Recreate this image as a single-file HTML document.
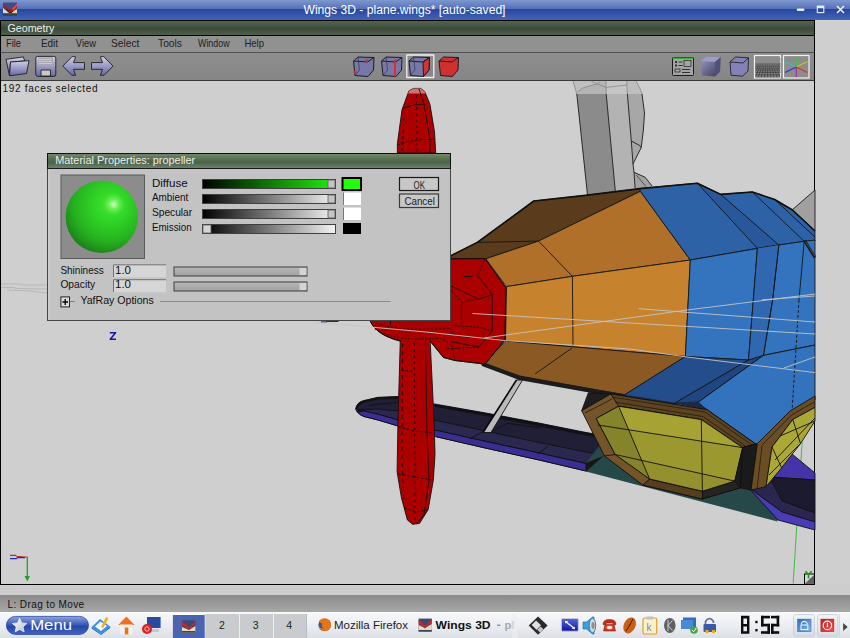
<!DOCTYPE html>
<html><head><meta charset="utf-8">
<style>
html,body{margin:0;padding:0;width:850px;height:638px;overflow:hidden;background:#d0d0d0;}
svg{display:block;}
text{font-family:"Liberation Sans",sans-serif;}
.mono{font-family:"Liberation Mono",monospace;}
</style></head><body>
<svg width="850" height="638" viewBox="0 0 850 638">
<defs>
<linearGradient id="gTitle" x1="0" y1="0" x2="0" y2="20" gradientUnits="userSpaceOnUse">
<stop offset="0" stop-color="#7f97cf"/><stop offset="0.43" stop-color="#5571b9"/>
<stop offset="0.45" stop-color="#24469e"/><stop offset="1" stop-color="#4464b6"/>
</linearGradient>
<linearGradient id="gGeo" x1="0" y1="0" x2="0" y2="1">
<stop offset="0" stop-color="#53644f"/><stop offset="0.55" stop-color="#3c4b3a"/><stop offset="1" stop-color="#4e5f4a"/>
</linearGradient>
<linearGradient id="gStatus" x1="0" y1="0" x2="0" y2="1">
<stop offset="0" stop-color="#8a8a8a"/><stop offset="1" stop-color="#a8a8a8"/>
</linearGradient>
<linearGradient id="gTask" x1="0" y1="0" x2="0" y2="1">
<stop offset="0" stop-color="#f6f6f6"/><stop offset="1" stop-color="#e4e4e4"/>
</linearGradient>
</defs>

<!-- desktop background -->
<rect x="0" y="0" width="850" height="638" fill="#cfcfcf"/>

<!-- title bar -->
<rect x="0" y="0" width="850" height="20" fill="url(#gTitle)"/>
<text x="303.5" y="14" font-size="12" fill="#ffffff" textLength="202" lengthAdjust="spacingAndGlyphs">Wings 3D - plane.wings* [auto-saved]</text>

<!-- window frame -->
<rect x="0" y="20" width="815" height="565" fill="#000"/>
<!-- geometry bar -->
<rect x="1" y="21" width="813" height="14" fill="url(#gGeo)"/>
<text x="7.4" y="31.5" font-size="10.7" fill="#f0f0f0" textLength="47" lengthAdjust="spacingAndGlyphs">Geometry</text>
<!-- menu bar -->
<rect x="1" y="36" width="813" height="16" fill="#919191"/>
<rect x="1" y="52" width="813" height="1" fill="#505050"/>
<g font-size="10.6" fill="#1e1e1e">
<text x="6.1" y="47.2" textLength="14.9" lengthAdjust="spacingAndGlyphs">File</text><text x="40.9" y="47.2" textLength="17.1" lengthAdjust="spacingAndGlyphs">Edit</text><text x="75.8" y="47.2" textLength="20.2" lengthAdjust="spacingAndGlyphs">View</text>
<text x="111" y="47.2" textLength="28.4" lengthAdjust="spacingAndGlyphs">Select</text><text x="158" y="47.2" textLength="24" lengthAdjust="spacingAndGlyphs">Tools</text><text x="198" y="47.2" textLength="31.6" lengthAdjust="spacingAndGlyphs">Window</text><text x="244.4" y="47.2" textLength="19.6" lengthAdjust="spacingAndGlyphs">Help</text>
</g>
<!-- toolbar -->
<linearGradient id="gTool" x1="0" y1="0" x2="0" y2="1"><stop offset="0" stop-color="#8e8e8e"/><stop offset="1" stop-color="#868686"/></linearGradient>
<rect x="1" y="53" width="813" height="27" fill="url(#gTool)"/>
<rect x="1" y="80" width="813" height="1" fill="#3a3a3a"/>

<defs>
<linearGradient id="gLav" x1="0" y1="0" x2="0" y2="1">
<stop offset="0" stop-color="#d0d0e4"/><stop offset="1" stop-color="#6666a8"/>
</linearGradient>
<linearGradient id="gMenuBtn" x1="0" y1="0" x2="0" y2="1">
<stop offset="0" stop-color="#8ca4e0"/><stop offset="0.45" stop-color="#3c5cb8"/><stop offset="0.55" stop-color="#2446a8"/><stop offset="1" stop-color="#4664c0"/>
</linearGradient>
<radialGradient id="gSmoothCube" cx="0.6" cy="0.3" r="0.8">
<stop offset="0" stop-color="#b4b4e0"/><stop offset="0.6" stop-color="#6c6c98"/><stop offset="1" stop-color="#2c2c40"/>
</radialGradient>
</defs>
<!-- title icon -->
<rect x="3" y="2.5" width="14" height="13.2" fill="#3e4e80"/>
<polygon points="3,8 9.5,13.5 3,13.5" fill="#e4d8c4"/>
<polygon points="13,11.5 17,9 17,13.5 11,13.5" fill="#f0cc98"/>
<polygon points="5,8.5 10.5,13.5 13.5,11 10,10" fill="#1a1018"/>
<path d="M3,4.5 Q7.5,6.5 10,10.5 Q13,8 17,3.8 L17,6 Q13.5,10.5 10.5,13 Q7.5,9 3,7.5 Z" fill="#b81818"/>
<path d="M12,9 Q14.5,6.5 17,3.8 L17,5.5 Q15,8.5 13,10 Z" fill="#ff4a4a"/>
<rect x="3" y="13.3" width="14" height="2.4" fill="#2a4656"/>
<!-- window buttons -->
<rect x="796.7" y="8.5" width="7.8" height="2.6" rx="1.3" fill="#e8ecf4"/>
<rect x="817.3" y="6.1" width="6.5" height="6.5" fill="none" stroke="#e8ecf4" stroke-width="1.1"/>
<rect x="817" y="6" width="7" height="2" fill="#e8ecf4"/>
<path d="M837,6 L844,13 M844,6 L837,13" stroke="#f0f2f8" stroke-width="1.5"/>
<!-- toolbar icons -->
<g stroke="#1e1e28" stroke-width="0.9" stroke-linejoin="round">
<polygon points="6,59.3 23.4,56.9 24.7,61 10.5,62 9.5,75.8" fill="url(#gLav)"/>
<polygon points="10.5,62 29,60.7 26.5,73.5 9.5,75.8" fill="url(#gLav)"/>
<rect x="35.8" y="56.4" width="20" height="20" rx="2" fill="url(#gLav)"/>
<rect x="38.5" y="57.5" width="14.5" height="8" fill="#a8a8b0" stroke="none"/>
<path d="M39,59.5 H52 M39,61.5 H52 M39,63.5 H52" stroke="#d8d8de" stroke-width="0.7"/>
<rect x="41" y="70" width="9.5" height="6" fill="#c8c8c8" stroke="#222"/>
<polygon points="62.9,66.1 72.1,56.6 75.6,56.9 73.5,62.6 84.5,62.6 84.5,69.3 73.5,69.3 75.6,75.3 71.8,75.3" fill="url(#gLav)"/>
<polygon points="113,66.1 103.8,56.6 100.3,56.9 102.5,62.6 91.5,62.6 91.5,69.3 102.5,69.3 100.3,75.3 104.1,75.3" fill="url(#gLav)"/>
</g>
<!-- selection mode cubes -->
<g stroke="#1c1c24" stroke-width="1" stroke-linejoin="round">
<g id="cube1">
<polygon points="353.5,61 358,57 374,57.5 373.5,70 368,76.5 355,75.5" fill="#7878a8"/>
<polyline points="353.5,61 367.5,62 374,57.5 M367.5,62 368,76.5" fill="none"/>
<polyline points="358,57 359.5,70 355,75.5 M359.5,70 373.5,70" fill="none" stroke="#34344a" stroke-width="0.7"/>
</g>
<polygon points="381.5,61 386,57 402,57.5 401.5,70 396,76.5 383,75.5" fill="#7878a8"/>
<polyline points="381.5,61 395.5,62 402,57.5 M395.5,62 396,76.5" fill="none"/>
<polyline points="386,57 387.5,70 383,75.5 M387.5,70 401.5,70" fill="none" stroke="#34344a" stroke-width="0.7"/>
<rect x="406.8" y="55" width="27" height="22.5" fill="none" stroke="#f0f0f0" stroke-width="1.3"/>
<polygon points="409,61 413.5,57 429.5,57.5 429,70 423.5,76.5 410.5,75.5" fill="#7878a8"/>
<polygon points="423,62 429.5,57.5 429,70 423.5,76.5" fill="#d03434"/>
<polyline points="409,61 423,62 429.5,57.5 M423,62 423.5,76.5" fill="none"/>
<polyline points="413.5,57 415,70 410.5,75.5 M415,70 429,70" fill="none" stroke="#34344a" stroke-width="0.7"/>
<polygon points="439,61 443.5,57 458.5,57.5 458,70 452.5,76.5 440.5,75.5" fill="#d03030"/>
<polyline points="439,61 452,62 458.5,57.5 M452,62 452.5,76.5" fill="none"/>
</g>
<circle cx="366.8" cy="60.5" r="1.6" fill="#e02828"/>
<circle cx="355" cy="72" r="1.6" fill="#e02828"/>
<rect x="394" y="59.5" width="1.8" height="17" fill="#e02828"/>
<!-- right toolbar icons -->
<rect x="672.5" y="57.5" width="21" height="18" rx="1" fill="#a4a4a4" stroke="#1a1a1a" stroke-width="1"/>
<rect x="673" y="57.5" width="20" height="1.5" fill="#30b030"/>
<g fill="#303030">
<rect x="675" y="61" width="2" height="2"/><rect x="678.5" y="61.5" width="4" height="1"/>
<rect x="675" y="64.5" width="2" height="2"/><rect x="678.5" y="65" width="4" height="1"/>
<rect x="684" y="60.5" width="7" height="6" fill="none" stroke="#303030" stroke-width="0.8"/>
<rect x="675" y="69" width="5" height="3" fill="none" stroke="#303030" stroke-width="0.8"/>
<rect x="682" y="69" width="8" height="1"/><rect x="682" y="72" width="8" height="1"/>
</g>
<linearGradient id="gCubeF" x1="0" y1="0" x2="1" y2="1"><stop offset="0" stop-color="#9a9ac8"/><stop offset="1" stop-color="#383858"/></linearGradient>
<polygon points="701,61 706.5,56.8 720.6,57.2 720,71.5 715,76.5 702,75.5" fill="url(#gCubeF)"/>
<polygon points="701,61 706.5,56.8 720.6,57.2 715,62" fill="#9c9ccc"/>
<polygon points="715,62 720.6,57.2 720,71.5 715,76.5" fill="#505078"/>
<g stroke="#22222e" stroke-width="0.9" stroke-linejoin="round">
<polygon points="730,62 735.5,57 748.5,57.8 748,71 742.5,76.2 731,75.2" fill="#8282b6"/>
<polyline points="730,62 743,63 748.5,57.8 M743,63 742.5,76.2" fill="none"/>
</g>
<!-- grid icon -->
<defs>
<linearGradient id="gGrid" x1="0" y1="0" x2="0" y2="1">
<stop offset="0" stop-color="#8c8c8c"/><stop offset="1" stop-color="#3a3a3a"/>
</linearGradient>
<pattern id="pGrid" width="3" height="3" patternUnits="userSpaceOnUse">
<rect width="3" height="3" fill="#7a7a7a"/><rect width="2" height="2" fill="#4a4a4a"/>
</pattern>
</defs>
<rect x="754.5" y="55.5" width="26" height="22.5" fill="#8c8c8c" stroke="#f4f4f4" stroke-width="1.2"/>
<linearGradient id="gGridFade" x1="0" y1="0" x2="0" y2="1"><stop offset="0" stop-color="#8c8c8c" stop-opacity="1"/><stop offset="1" stop-color="#8c8c8c" stop-opacity="0"/></linearGradient>
<clipPath id="cpGrid"><rect x="755.5" y="56" width="25" height="21.5"/></clipPath>
<g clip-path="url(#cpGrid)"><path d="M755.5,64 H780.5 M755.5,65.2 H780.5 M755.5,66.6 H780.5 M755.5,68.2 H780.5 M755.5,70.1 H780.5 M755.5,72.3 H780.5 M755.5,74.8 H780.5 M755.5,77.2 H780.5 M746.5,63 L722.9,77.5 M748.0,63 L726.1,77.5 M749.5,63 L729.3,77.5 M751.1,63 L732.5,77.5 M752.6,63 L735.7,77.5 M754.1,63 L738.9,77.5 M755.6,63 L742.1,77.5 M757.1,63 L745.3,77.5 M758.6,63 L748.5,77.5 M760.1,63 L751.7,77.5 M761.6,63 L754.9,77.5 M763.2,63 L758.1,77.5 M764.7,63 L761.3,77.5 M766.2,63 L764.5,77.5 M767.7,63 L767.7,77.5 M769.2,63 L770.9,77.5 M770.7,63 L774.1,77.5 M772.2,63 L777.3,77.5 M773.8,63 L780.5,77.5 M775.3,63 L783.7,77.5 M776.8,63 L786.9,77.5 M778.3,63 L790.1,77.5 M779.8,63 L793.3,77.5 M781.3,63 L796.5,77.5 M782.8,63 L799.7,77.5 M784.3,63 L802.9,77.5 M785.9,63 L806.1,77.5 M787.4,63 L809.3,77.5 M788.9,63 L812.5,77.5" stroke="#333" stroke-width="0.7" fill="none"/></g>
<rect x="755.5" y="58" width="25" height="12" fill="url(#gGridFade)"/>
<rect x="783.5" y="55.5" width="25.5" height="22.5" fill="#8c8c8c" stroke="#f4f4f4" stroke-width="1.2"/>
<g stroke-width="1.2">
<line x1="796.3" y1="57" x2="796.3" y2="67" stroke="#30d030"/>
<line x1="796.3" y1="67" x2="796.3" y2="77" stroke="#a030a0"/>
<line x1="796.3" y1="67" x2="807.5" y2="61.5" stroke="#d0c020"/>
<line x1="796.3" y1="67" x2="807.5" y2="72.5" stroke="#e03030"/>
<line x1="796.3" y1="67" x2="785" y2="62" stroke="#30c0c0"/>
<line x1="796.3" y1="67" x2="785" y2="72.5" stroke="#3030e0"/>
</g>

<!-- viewport -->
<rect x="1" y="81" width="813" height="503" fill="#cfcfcf"/>

<g id="scene">
<!-- gray strut -->
<g stroke="#1a1a1a" stroke-width="0.9" stroke-linejoin="round">
<polygon points="573,81 606,81 606.2,94 576.8,94" fill="#b4b4b4" stroke="none"/>
<polygon points="606,81 627,81 627.4,94 606.2,94" fill="#c6c6c6" stroke="none"/>
<polygon points="627,81 636.2,81 641.5,92 642,94 627.4,94" fill="#bebebe" stroke="none"/>
<polygon points="573,81 606,81 600.3,81.5 596.8,83.9 582.6,88 576.8,94" fill="#c0c0c0" stroke="none"/>
<g stroke="#8c8c8c" stroke-width="0.9" fill="none">
<polyline points="573,81 576.8,94"/><polyline points="636.2,81 641.5,92 642,94"/>
<polyline points="577.5,92 582.6,88 596.8,83.9 600.3,81.5"/><polyline points="596.8,83.9 606.2,87.4 626.8,85 627,81"/>
<polyline points="606,81 606.2,94"/><polyline points="626.8,85 627.4,94"/>
<polyline points="591,81 596.8,83.9"/>
</g>
<polygon points="576.8,94 606.2,94 615.5,193 587.5,195" fill="#8b8b8b" stroke="none"/>
<polygon points="606.2,94 627.4,94 631.3,141 633,164 634,172.3 635.1,188 615.5,193" fill="#b3b3b3" stroke="none"/>
<polygon points="627.4,94 642,94 644.5,113 643.4,130 641.2,147.6 633,164 631.3,141" fill="#a7a7a7" stroke="none"/>
<polygon points="634,172.3 645,177.2 652.1,186 650,188.5 635.1,188" fill="#a2a2a2" stroke="none"/>
<polyline points="576.8,94 587.5,195" fill="none"/><polyline points="606.2,94 615.5,193" fill="none"/><polyline points="627.4,94 631.3,141 633,164 634,172.3 635.1,188" fill="none"/>
<polyline points="642,94 644.5,113 643.4,130 641.2,147.6 633,164" fill="none"/>
<polyline points="631.3,141 639.5,145.4 641.2,147.6" fill="none"/>
<polyline points="634,172.3 645,177.2 652.1,186" fill="none"/>
<polyline points="636.2,175 646,186.5" fill="none" stroke-width="0.6"/>

<!-- right gray triangle -->
<polygon points="815,190 792,210 815,231" fill="#a0a0a0"/>
</g>
<!-- body top -->
<g stroke="#141414" stroke-width="0.9" stroke-linejoin="round">
<polygon points="451,255.6 477.3,242.4 533.8,201 585.5,195.4 640,188.6 640.4,191.3 538.5,241.1 485.8,258.8 451,258.8" fill="#5a3c1d"/>
<polyline points="477.3,242.4 538.5,241.1" fill="none"/>
<polygon points="485.8,258.8 538.5,241.1 640.4,191.3 690.3,260 572.4,276.3 506.5,286.6" fill="#b0702a"/>
<polyline points="538.5,241.1 572.4,276.3" fill="none"/>
<!-- blue upper -->
<polygon points="640.4,191.3 639.5,188.5 697.3,183.2 720.7,194.4 752.3,192 774.7,199.5 792,209.7 815,231 815,241 804.2,241.3 778.8,245 757.4,248.4 690.3,260" fill="#2e62a7"/>
<polygon points="697.3,183.2 720.7,194.4 778.8,245 757.4,248.4" fill="#285899"/>
<polyline points="752.3,192 804.2,241.3" fill="none"/>
<polyline points="774.7,199.5 815,237" fill="none"/>
<polyline points="451,255.6 477.3,242.4 533.8,201 585.5,195.4 640,188.6 697.3,183.2 720.7,194.4 752.3,192 774.7,199.5 792,209.7 815,231" fill="none" stroke="#111" stroke-width="1.6"/>
<!-- orange lower front -->
<polygon points="506.5,286.6 572.4,276.3 690.3,260 688.8,290 685.4,356.5 505.5,341" fill="#c7822e"/>
<polyline points="572.4,276.3 573,346" fill="none"/>
<!-- blue lower front -->
<polygon points="690.3,260 757.4,248.4 778.8,245 804.2,241.3 815,240 815,345 763.4,355.4 748.5,360 685.4,356.5" fill="#3474be"/>
<polyline points="757.4,248.4 753.3,300 748.5,360" fill="none"/>
<polyline points="778.8,245 772.6,300 763.4,355.4" fill="none"/>
<polygon points="757.4,248.4 778.8,245 763.4,355.4 748.5,360" fill="#2f68b0" stroke="none"/>
<polyline points="757.4,248.4 753.3,300 748.5,360" fill="none"/>
<polyline points="778.8,245 772.6,300 763.4,355.4" fill="none"/>
<polyline points="804.2,241.3 799,300" fill="none"/>
<polyline points="804.5,240.5 815,257.5" fill="none" stroke="#161616" stroke-width="2.8"/>
<polyline points="805.5,241.5 815,256.5" fill="none" stroke="#6a6a6a" stroke-width="0.7"/>
<!-- orange bottom -->
<polygon points="483.9,363.6 505.5,341 685.4,356.5 625,394.7 520,377" fill="#8b5a24"/>
<polyline points="572,348 535,374" fill="none"/>
<!-- blue bottom -->
<polygon points="685.4,356.5 748.5,360 674,403.6 623.4,395.5" fill="#234e8b"/>
<polygon points="748.5,360 763.4,355.4 698,402.4 674,403.6" fill="#1f4680"/>
<polygon points="763.4,355.4 815,345 815,400 791,412 756,446 706.9,409.6 698,402.4" fill="#3372bc"/>
<polyline points="799,300 792,412" fill="none" stroke-dasharray="3,2"/>
<!-- shadow under body -->
<polygon points="480,361 520,375.5 625,394.5 620,398 519,380 482,366" fill="#1c1c1c" stroke="none"/>
</g>
<!-- wing left -->
<g stroke="#101010" stroke-width="0.9" stroke-linejoin="round">
<path d="M355.6,408.8 Q357,402 364,400.5 L378,397.3 L398,396.5 L434,403.9 L483,412.5 L540,423.3 L586,432.5 L625,439 V470 L586,471 L540,460.2 L483,447.5 L434,436.2 L398,426 L378,420 L364,416.5 Q357,414 355.6,408.8 Z" fill="#211f36"/>
<path d="M355.6,408.8 Q357,402 364,400.5 L378,397.3 L398,396.5 L434,403.9 L483,412.5 L540,423.3 L586,432.5 L625,439 V442 L586,435.5 L540,426.5 L483,415.5 L434,406.8 L398,399 L378,399.5 L364,402.5 Q359,405 356.5,409 Z" fill="#111018" stroke="none"/>
<path d="M357.5,409.8 L364,409.5 L378,409 L398,411 L434,420 L483,430.4 L540,442.7 L586,452 L625,458 V470 L586,463.5 L540,453.2 L483,440.8 L434,429.8 L398,420 L378,414.2 L364,411 Z" fill="#2b2850"/>
<path d="M358.1,411.7 L364,411 L378,414.2 L398,420 L434,429.8 L483,440.8 L540,453.2 L586,463.5 L586,471 L540,460.2 L483,447.5 L434,436.2 L398,426 L378,420 L364,416.5 Q359.5,415 357.5,411.5 Z" fill="#3b2e92"/>
<polyline points="470.1,438.8 481.8,432.4" fill="none"/>
<polyline points="490.8,432 507.6,423.3 540,427.8" fill="none"/>
<polyline points="537.4,454.4 548,446" fill="none"/>
<polyline points="585,464 600,454" fill="none"/>
<polyline points="369,405.5 378,404 398,402.5" fill="none"/>
</g>
<g stroke="#101010" stroke-width="0.9" stroke-linejoin="round">
<!-- strut -->
<polygon points="516.5,380 522.5,380 491,432.5 483,432.5" fill="#bababa"/>
<polyline points="516.5,380 483,432.5" fill="none" stroke="#0a0a0a" stroke-width="1.6"/>
</g>
<polyline points="802.2,441.7 796.8,525 793.2,583.5" fill="none" stroke="#40c040" stroke-width="1"/>
<g stroke="#101010" stroke-width="0.9" stroke-linejoin="round">
<!-- teal shadow -->
<polygon points="586,463 600,445 700,470 760,470 777.5,519.5 777.5,521.5 586,471.5" fill="#264848" stroke="none"/>
<polygon points="586,463 603.5,456 586,471.5" fill="#161616" stroke="none"/>
<!-- right purple wing -->
<polygon points="792,454 815,473 815,480 769.5,477" fill="#4434a8"/>
<polygon points="769.5,477 815,480 815,513 782,501" fill="#1c1a2e"/>
<polygon points="748,487 769.5,477 782,501 815,513 815,522 782,512" fill="#2a2650"/>
<polygon points="748,487 782,512 815,522 815,530 778,520" fill="#4a3cb8"/>
<!-- pod -->
<polygon points="610,392 674,402.5 698,401.5 707.5,410 706.9,409.6" fill="#1a2a48" stroke="none"/>
<polygon points="581.7,410.7 588.4,392.8 612,393.9 600,405" fill="#1e1e1e"/>
<polygon points="581.7,410.7 610.8,393.9 706.9,409.6 756,444.2 740.4,487.8 702.4,499 642.7,485 604.5,456" fill="#74552a"/>
<polygon points="610.8,393.9 706.9,409.6 756,444.2 742.6,447.6 701.3,419.6 618.6,406.2" fill="#5c4321"/>
<polyline points="612,397 705,412 752,445" fill="none" stroke="#2a2010"/>
<polyline points="615,402 703,416.5 746,446.5" fill="none" stroke="#2a2010"/>
<polyline points="585,413 612,399" fill="none" stroke="#2a2010"/>
<polygon points="756,444.2 740.4,487.8 734.8,481.1 742.6,447.6" fill="#1c1c1c"/>
<polygon points="702.4,499 740.4,487.8 734.8,481.1 702.4,491.2" fill="#262420"/>
<polygon points="642.7,485 702.4,499 702.4,491.2 649.6,479" fill="#563e1e"/>
<polygon points="596.2,418.5 618.6,406.2 701.3,419.6 742.6,447.6 734.8,481.1 702.4,491.2 649.6,479 615.2,454.5" fill="#9c9830"/>
<polygon points="618.6,406.2 701.3,419.6 742.6,447.6 701.8,441.3 627,429.8" fill="#a6a234" stroke="none"/>
<polygon points="615.2,454.5 734.8,481.1 702.4,491.2 649.6,479" fill="#94902e" stroke="none"/>
<polygon points="596.2,418.5 618.6,406.2 649.6,479 615.2,454.5" fill="#86842a" stroke="none"/>
<polygon points="596.2,418.5 618.6,406.2 701.3,419.6 742.6,447.6 734.8,481.1 702.4,491.2 649.6,479 615.2,454.5" fill="none"/>
<polyline points="618.6,406.2 649.6,479" fill="none"/>
<polyline points="604.5,456 615.2,454.5 M642.7,485 649.6,479" fill="none"/>
<polyline points="598,425 742.6,447.6" fill="none"/>
<polyline points="615.2,454.5 734.8,481.1" fill="none"/>
<polyline points="701.3,419.6 702.4,491.2" fill="none"/>
<!-- right pod -->
<polygon points="740.4,487.8 756,444.2 742.6,447.6" fill="#1c1c1c"/>
<polygon points="742.6,447.6 757.4,443.6 751,490 740.4,487.8" fill="#1a1a1a"/>
<polygon points="757.4,443.6 790.2,410.9 815,396.2 815,407.4 792.8,419.5 772,447 766,486.7 751,490" fill="#6a4d25"/>
<polyline points="762,445 791.5,415 815,401.5" fill="none" stroke="#2a2010"/>
<polyline points="762,446 757,489" fill="none" stroke="#2a2010"/>
<polygon points="792.8,419.5 815,407.4 815,411.5 794.5,422.5" fill="#8a8a80" stroke="none"/>
<polygon points="772,447 792.8,419.5 815,407.4 815,421 800.5,443.6 781.6,467.8 766,486.7" fill="#aca837"/>
<polyline points="772,447 781.6,467.8" fill="none"/>
<polyline points="792.8,419.5 800.5,443.6" fill="none"/>
<polyline points="775,460 815,418" fill="none"/>
<polyline points="769,475 800.5,443.6" fill="none"/>
<polyline points="780,436 815,421" fill="none"/>
<!-- red hub -->
<path d="M400,258.8 L485.1,258.6 L505.8,287.5 L505,339.8 L485.1,364.1 L455,360.5 L443.4,357.4 L430.1,341 L400,341 Q385,337 378,331 Q372,326 369.8,320.3 L369.9,316 Z" fill="#aa0000"/>
<polyline points="451,258.8 485.1,258.6 505.8,287.5 505,339.8 485.1,364.1 455,360.5 443.4,357.4 430.1,341" fill="none"/>
<path d="M400,341 Q385,337 378,331 Q372,326 369.8,320.3" fill="none"/>
<polyline points="477.9,275.7 492.3,294.7 492.3,330.8 478.8,347 450.8,341.6" fill="none" stroke-width="0.8"/>
<polyline points="485.1,258.6 477.9,275.7 M505.8,287.5 492.3,294.7 M505,339.8 492.3,330.8 M485.1,364.1 478.8,347" fill="none" stroke-width="0.8" stroke-dasharray="2.5,1.2"/>
<polyline points="450.8,285.7 478.8,299.2 492.3,294.7" fill="none" stroke-width="0.8"/>
<polyline points="450.8,290 461.6,301.9 478.8,299.2" fill="none" stroke-width="0.8" stroke-dasharray="2.5,1.2"/>
<polyline points="461.6,301.9 461.6,325.4 M478.8,299.2 478.8,327.2" fill="none" stroke-width="0.8"/>
<polyline points="450.8,325.4 478.8,327.2 492.3,330.8" fill="none" stroke-width="0.8" stroke-dasharray="2.5,1.2"/>
<polyline points="447.2,348.8 478.8,347" fill="none" stroke-width="0.8" stroke-dasharray="2.5,1.2"/>
<polyline points="451,332 458,336 470,338" fill="none" stroke-width="0.8" stroke-dasharray="2,1.2"/>
<line x1="463.5" y1="276.6" x2="472.5" y2="276.6" stroke-width="1"/>
<path d="M375.6,323 Q392,328.5 410,329 L440,329 L451,328" fill="none" stroke-width="0.8" stroke-dasharray="2.5,1.5"/>
<path d="M374.5,329 Q385,335 400,338 Q420,340 440,338" fill="none" stroke-width="0.8" stroke-dasharray="2,1.5"/>
<polyline points="390.5,320 390.5,325 M410.5,320 410.5,329 M427.5,320 427.5,331" fill="none" stroke-width="0.9"/>
<polyline points="440,338 452,345 455,360" fill="none" stroke-width="0.8" stroke-dasharray="2,1.5"/>
<!-- upper blade -->
<polygon points="397.4,153 397.4,143.5 402,109.8 409,90.7 413.6,88.4 420.6,88.4 424.6,91.3 429.9,104 434.5,131.9 435.7,153" fill="#ac0000"/>
<polygon points="408.2,93.5 409,90.7 413.6,88.4 420.6,88.4 424.6,91.3 425.5,93.5" fill="#cf7272" stroke="none"/>
<polyline points="403,108 414,105 425,104" fill="none"/>
<polyline points="397.4,145 405,142 418,140 435,139" fill="none" stroke-dasharray="3,1.5"/>
<polyline points="419,89 424,104 430,140 430,153" fill="none"/>
<polyline points="416.5,95 417,153" fill="none" stroke-dasharray="3,3"/>
<polyline points="404,118 402,153" fill="none" stroke-dasharray="3,3"/>
<!-- lower blade -->
<polygon points="400.3,340 398,420 397.1,471.7 401.4,497.6 407.4,520 412.6,524.3 419.5,523.4 428.1,509.7 433.3,480.3 435,454.5 434,420 430.1,340" fill="#ac0000" stroke="none"/>
<polyline points="400.3,340 398,420 397.1,471.7 401.4,497.6 407.4,520 412.6,524.3 419.5,523.4 428.1,509.7 433.3,480.3 435,454.5 434,420 430.1,340" fill="none"/>
<polyline points="401.5,370 412,371.5" fill="none" stroke-dasharray="2.5,1.5"/>
<polyline points="398,427 415,431 433,433" fill="none" stroke-dasharray="3,1.5"/>
<polyline points="398.5,474 415,477 433,480" fill="none" stroke-dasharray="3,1.5"/>
<polyline points="404,508 416,512 428,510" fill="none" stroke-dasharray="3,1.5"/>
<polyline points="425.4,340 427,433 429,480 424,515 416,524" fill="none"/>
<polyline points="414.3,343 415,480 415,520" fill="none" stroke-dasharray="3,3"/>
<polyline points="402.6,343 402,460 404,500" fill="none" stroke-dasharray="4,4"/>
</g>
<!-- faint grid lines -->
<g stroke="#c4c4c4" stroke-width="0.9" fill="none">
<polyline points="315,322 370,327 430,332.4 505,340.6 630,349 687,357 815,372.6"/>
<polyline points="472.4,313.5 630,323 815,334"/>
<polyline points="484,338 687,310 815,294"/>
<polyline points="638.5,308.7 815,322"/>
<polyline points="762,299.8 815,296"/>
<polyline points="784,368 815,357"/>
</g>
<!-- z label -->
<path d="M109.8,332.8 H115.6 L110.2,339.2 H116" fill="none" stroke="#1414b0" stroke-width="1.5" stroke-linejoin="round"/>
<g stroke="#b4b4b4" stroke-width="0.9" fill="none"><polyline points="1,284 21,284 21,285 47,285"/><polyline points="1,287.5 15,287.5 15,288.5 47,289"/><polyline points="7,290 30,291 47,293"/></g>
<!-- axis indicator -->
<g fill="none" stroke-width="1.1">
<polyline points="10,555.4 15.5,555.4 16.5,556.2 28,557.2" stroke="#b03030"/>
<polyline points="10,558.6 16.5,558.6 17.5,557.6 25,557.6" stroke="#2828b0"/>
<polyline points="27.3,557.5 27.3,580" stroke="#20a030" stroke-width="1.3"/>
<polygon points="24.5,576 30,576 27.3,581.5" fill="#20a030" stroke="none"/>
</g>
<!-- green Y axis line -->

<!-- resize grip -->
<rect x="804.5" y="574" width="10" height="10" fill="#d8d8d8" stroke="#000" stroke-width="1"/>
<polygon points="814,575 814,583 805.5,583" fill="#606060"/>
<path d="M805.5,571.3 L808.5,574.8 L811.6,571.3 M808.5,574.8 V578.6" fill="none" stroke="#12a012" stroke-width="1.6"/>
</g>
<!-- dialog -->
<rect x="321" y="319.5" width="6" height="3" fill="#5a5ac8"/><rect x="326.5" y="319" width="12" height="3" fill="#1e1e98"/>
<g id="dialog">
<defs>
<linearGradient id="gDlgTitle" x1="0" y1="0" x2="0" y2="1">
<stop offset="0" stop-color="#6f886d"/><stop offset="0.35" stop-color="#56704f"/><stop offset="0.6" stop-color="#4a624a"/><stop offset="1" stop-color="#6a8468"/>
</linearGradient>
<radialGradient id="gSphere" cx="0.6" cy="0.35" r="0.72" fx="0.64" fy="0.33">
<stop offset="0" stop-color="#40e830"/><stop offset="0.35" stop-color="#2fd226"/><stop offset="0.7" stop-color="#26b01f"/><stop offset="0.92" stop-color="#1c861a"/><stop offset="1" stop-color="#145e14"/>
</radialGradient>
<radialGradient id="gSpec" cx="0.5" cy="0.5" r="0.5">
<stop offset="0" stop-color="#e8ffe0" stop-opacity="0.95"/><stop offset="0.35" stop-color="#a8ff90" stop-opacity="0.55"/><stop offset="1" stop-color="#50f040" stop-opacity="0"/>
</radialGradient>
<linearGradient id="gSlGreen" x1="0" y1="0" x2="1" y2="0">
<stop offset="0" stop-color="#000"/><stop offset="1" stop-color="#22ee10"/>
</linearGradient>
<linearGradient id="gSlGray" x1="0" y1="0" x2="1" y2="0">
<stop offset="0" stop-color="#000"/><stop offset="1" stop-color="#f4f4f4"/>
</linearGradient>
<linearGradient id="gSlFlat" x1="0" y1="0" x2="0" y2="1">
<stop offset="0" stop-color="#b8b8b8"/><stop offset="1" stop-color="#a0a0a0"/>
</linearGradient>
</defs>
<rect x="47" y="153" width="404" height="168" fill="#464646"/>
<rect x="47" y="153" width="404" height="16" fill="#111"/>
<rect x="48" y="154" width="402" height="14" fill="url(#gDlgTitle)"/>
<rect x="48" y="168" width="402" height="1" fill="#1a1a1a"/>
<rect x="48" y="169" width="402" height="151" fill="#c3c3c3"/>
<rect x="48" y="169" width="2" height="151" fill="#cacaca"/>
<text x="55.2" y="164.2" font-size="10.7" fill="#ededed" textLength="140" lengthAdjust="spacingAndGlyphs">Material Properties: propeller</text>
<!-- preview -->
<rect x="61" y="175" width="83.5" height="83.5" fill="#8c8c8c" stroke="#5a5a5a" stroke-width="1"/>
<circle cx="101.8" cy="216.8" r="36.2" fill="url(#gSphere)"/>
<circle cx="113.7" cy="204.4" r="12" fill="url(#gSpec)"/>
<!-- labels -->
<g font-size="10.7" fill="#111">
<text x="151.9" y="186.6" textLength="35.9" lengthAdjust="spacingAndGlyphs">Diffuse</text>
<text x="151.9" y="201.4" textLength="36.4" lengthAdjust="spacingAndGlyphs">Ambient</text>
<text x="151.9" y="216.3" textLength="40.3" lengthAdjust="spacingAndGlyphs">Specular</text>
<text x="151.9" y="230.9" textLength="39.8" lengthAdjust="spacingAndGlyphs">Emission</text>
<text x="60.4" y="273.8" textLength="43.3" lengthAdjust="spacingAndGlyphs">Shininess</text>
<text x="60.4" y="288.2" textLength="34.8" lengthAdjust="spacingAndGlyphs">Opacity</text>
<text x="80.4" y="303.5" textLength="73.4" lengthAdjust="spacingAndGlyphs">YafRay Options</text>
</g>
<!-- color sliders -->
<g stroke="#404040" stroke-width="1">
<rect x="202.5" y="179.5" width="133" height="9" fill="url(#gSlGreen)"/>
<rect x="202.5" y="194.5" width="133" height="9" fill="url(#gSlGray)"/>
<rect x="202.5" y="209.5" width="133" height="9" fill="url(#gSlGray)"/>
<rect x="202.5" y="224.5" width="133" height="9" fill="url(#gSlGray)"/>
</g>
<g fill="#c4c4c4" stroke="#5a5a5a" stroke-width="0.8">
<rect x="328" y="180" width="7" height="8"/>
<rect x="328" y="195" width="7" height="8"/>
<rect x="328" y="210" width="7" height="8"/>
<rect x="203" y="225" width="8" height="8" fill="#d4d4d4"/>
</g>
<!-- swatches -->
<rect x="342.5" y="178" width="18.5" height="12" fill="#22ff0a" stroke="#000" stroke-width="2"/>
<rect x="343" y="192.5" width="18" height="12.5" fill="#ffffff"/>
<rect x="343" y="192.5" width="1" height="12.5" fill="#777"/>
<rect x="343" y="207.5" width="18" height="12.5" fill="#ffffff"/>
<rect x="343" y="207.5" width="1" height="12.5" fill="#777"/>
<rect x="343" y="223" width="18" height="11" fill="#000"/>
<!-- buttons -->
<rect x="399.5" y="177.5" width="39" height="13" fill="#c8c8c8" stroke="#1a1a1a" stroke-width="1.2"/>
<text x="413.6" y="188.8" font-size="11" fill="#222" textLength="11.4" lengthAdjust="spacingAndGlyphs">OK</text>
<rect x="399.5" y="194" width="39" height="13.5" fill="#c8c8c8" stroke="#3a3a3a" stroke-width="1.2"/>
<text x="404.4" y="205" font-size="11" fill="#222" textLength="30.5" lengthAdjust="spacingAndGlyphs">Cancel</text>
<!-- number inputs -->
<g>
<rect x="113" y="264.3" width="53" height="13" fill="#d6d6d6"/>
<path d="M113.5,277 V264.8 H166" stroke="#707070" fill="none" stroke-width="1"/>
<rect x="113" y="279.2" width="53" height="13" fill="#d6d6d6"/>
<path d="M113.5,292 V279.7 H166" stroke="#707070" fill="none" stroke-width="1"/>
<text x="115" y="273.8" font-size="10.7" fill="#111" textLength="16" lengthAdjust="spacingAndGlyphs">1.0</text>
<text x="115" y="288.2" font-size="10.7" fill="#111" textLength="16" lengthAdjust="spacingAndGlyphs">1.0</text>
</g>
<g stroke="#404040" stroke-width="1">
<rect x="174" y="267" width="133" height="9" fill="url(#gSlFlat)"/>
<rect x="174" y="282" width="133" height="9" fill="url(#gSlFlat)"/>
</g>
<rect x="299.5" y="268" width="7" height="7" fill="#d4d4d4"/>
<rect x="299.5" y="283" width="7" height="7" fill="#d4d4d4"/>
<!-- yafray -->
<rect x="60.9" y="296.9" width="8.6" height="10" fill="#dcdcdc" stroke="#222" stroke-width="1"/>
<path d="M62.5,302 H68 M65.2,299 V305" stroke="#000" stroke-width="1.3"/>
<line x1="69.8" y1="301.5" x2="74.8" y2="301.5" stroke="#808080" stroke-width="1"/>
<line x1="160.2" y1="301.5" x2="390.6" y2="301.5" stroke="#8a8a8a" stroke-width="1"/>
</g>

<text x="2.6" y="91.6" font-size="10" fill="#111" textLength="95" lengthAdjust="spacing">192 faces selected</text>

<!-- below viewport -->
<rect x="0" y="585" width="850" height="10" fill="#cdcdcd"/>
<!-- status bar -->
<rect x="0" y="595" width="850" height="17" fill="url(#gStatus)"/>
<text x="7.6" y="607.8" font-size="10" fill="#111" textLength="76.5" lengthAdjust="spacing">L: Drag to Move</text>

<!-- taskbar -->
<!-- taskbar content -->
<defs>
<linearGradient id="gTB" x1="0" y1="0" x2="0" y2="1">
<stop offset="0" stop-color="#f8f9fb"/><stop offset="0.5" stop-color="#eceef2"/><stop offset="1" stop-color="#dcdfe4"/>
</linearGradient>
<linearGradient id="gBtnLight" x1="0" y1="0" x2="0" y2="1">
<stop offset="0" stop-color="#f2f4f8"/><stop offset="1" stop-color="#d8dce4"/>
</linearGradient>
<radialGradient id="gFF" cx="0.45" cy="0.4" r="0.6">
<stop offset="0" stop-color="#2050a0"/><stop offset="0.5" stop-color="#4070c0"/><stop offset="0.7" stop-color="#f08020"/><stop offset="1" stop-color="#c04010"/>
</radialGradient>
</defs>
<rect x="0" y="612" width="850" height="26" fill="url(#gTB)"/>
<rect x="6.4" y="616.4" width="82.1" height="18" rx="9" fill="url(#gMenuBtn)" stroke="#2a44a0" stroke-width="0.8"/>
<linearGradient id="gStar" x1="0" y1="0" x2="1" y2="1"><stop offset="0" stop-color="#ffffff"/><stop offset="1" stop-color="#b8bcc8"/></linearGradient>
<polygon points="19.6,618.2 21.7,622.9 26.8,623.5 23.0,626.9 24.1,631.9 19.6,629.4 15.1,631.9 16.2,626.9 12.4,623.5 17.5,622.9" fill="url(#gStar)" stroke="#e8ecf4" stroke-width="0.8" stroke-linejoin="round"/>
<text x="30.2" y="629.6" font-size="15.5" fill="#ffffff" textLength="41.8" lengthAdjust="spacingAndGlyphs">Menu</text>
<!-- launcher icons -->
<polygon points="91.7,627 100,619 110.2,626.5 101,634.4" fill="#3c90e0"/>
<polygon points="95,626.5 100.5,621.5 107,626 101,631" fill="#f4f8fc"/>
<polygon points="91.7,627 101,634.4 110.2,626.5 110.2,628 101,635 91.7,628.5" fill="#1e60b0"/>
<polygon points="101,627 106,617 108.5,618.2 103.2,628" fill="#f0b020"/>
<polygon points="126.4,616.4 118.2,625 134.6,625" fill="#f07020"/>
<rect x="120" y="624.5" width="12.6" height="9.9" fill="#f4f0ec"/>
<rect x="124.8" y="627.5" width="3.5" height="6.9" fill="#e07818"/>
<rect x="147" y="617" width="13.6" height="11" fill="#2a4aa0"/>
<rect x="149" y="629" width="10" height="3" fill="#c8c8c8"/>
<circle cx="147" cy="629" r="5" fill="#e02020"/>
<circle cx="147" cy="629" r="2.2" fill="none" stroke="#f4c0c0" stroke-width="1"/>
<!-- workspaces -->
<rect x="172.9" y="614" width="31.8" height="24" fill="#4a64b0"/>
<rect x="172.9" y="613.5" width="31.8" height="1.5" fill="#ffffff"/>
<rect x="182" y="620.4" width="13.4" height="12.3" fill="#3a4a70"/>
<polygon points="182,627 189,630 195.4,626 195.4,632.7 182,632.7" fill="#e8d8c0"/>
<polygon points="182,622 186,624 189,628 195.4,621 195.4,623.5 189,630 185,627 182,624.5" fill="#d02424"/>
<rect x="182" y="631" width="13.4" height="1.7" fill="#304858"/>
<rect x="205.4" y="614" width="33.6" height="24" fill="#c9cbce"/>
<rect x="240" y="614" width="33" height="24" fill="#c9cbce"/>
<rect x="274" y="614" width="32.5" height="24" fill="#c9cbce"/>
<rect x="239.1" y="614" width="0.9" height="24" fill="#eef0f2"/>
<rect x="273.1" y="614" width="0.9" height="24" fill="#eef0f2"/>
<g font-size="10.5" fill="#222">
<text x="219" y="628.8">2</text><text x="252.7" y="628.8">3</text><text x="286.2" y="628.8">4</text>
</g>
<rect x="306" y="614" width="1" height="24" fill="#b8bcc2"/>
<!-- tasks -->
<circle cx="324.7" cy="624.8" r="6.3" fill="#2a5ab0"/>
<path d="M319,622 Q320,618 325,618.5 Q330,618.5 331,624 Q331.5,630 325,631.2 Q319,631 318.4,625.5 Q320,629 324,628.5 Q321,627 322,623.5 Z" fill="#e87418"/>
<text x="334" y="628.6" font-size="11" fill="#1e1e1e" textLength="74" lengthAdjust="spacingAndGlyphs">Mozilla Firefox</text>
<rect x="418.6" y="618.6" width="13.2" height="13.1" fill="#3a4a70"/>
<polygon points="418.6,625 425,628 431.8,624 431.8,631.7 418.6,631.7" fill="#e8d8c0"/>
<polygon points="418.6,620 422,622 425,626 431.8,619 431.8,621.5 425,628.5 421,625 418.6,623" fill="#d02424"/>
<rect x="418.6" y="630" width="13.2" height="1.7" fill="#304858"/>
<text x="435.6" y="628.6" font-size="11" font-weight="bold" fill="#111" textLength="55" lengthAdjust="spacingAndGlyphs">Wings 3D</text>
<rect x="497" y="624.5" width="3.5" height="1.5" fill="#999"/>
<text x="504.5" y="628.6" font-size="11" font-weight="bold" fill="#a8a8a8">pl</text>
<rect x="512" y="614" width="6" height="24" fill="#eceef2" opacity="0.6"/>
<!-- floppy diamond -->
<polygon points="538,616.6 547.6,625.6 538,634.7 528.7,625.6" fill="#2a2a2a"/>
<polygon points="536,620.5 541,625.3 536.5,629.8 531.7,625" fill="#e0e0e0"/>
<polygon points="540.5,626.5 543.5,629.3 540,632.5 537.2,629.7" fill="#c8c8c8"/>
<!-- tray icons -->
<linearGradient id="gScr" x1="0" y1="0" x2="0" y2="1"><stop offset="0" stop-color="#5868d8"/><stop offset="1" stop-color="#0a14a8"/></linearGradient>
<rect x="561.4" y="618.5" width="16.9" height="12.7" rx="1.2" fill="url(#gScr)" stroke="#c8ccd8" stroke-width="0.9"/>
<path d="M565.5,621.5 L574.5,628.5" stroke="#f0f2ff" stroke-width="1.5"/>
<polygon points="564.8,620.8 568.5,621.2 565.5,623.6" fill="#f0f2ff"/><polygon points="575.2,629.2 571.5,628.8 574.5,626.4" fill="#f0f2ff"/>
<polygon points="583,622 586.5,622 592.5,617 594,617 594,634 592.5,634 586.5,629 583,629" fill="#3aa0d8" stroke="#1a6a98" stroke-width="0.6"/>
<ellipse cx="592.5" cy="625.5" rx="3.2" ry="7.2" fill="#d8d8d8" stroke="#2a88c0" stroke-width="1"/>
<ellipse cx="593" cy="625.5" rx="1.6" ry="3.5" fill="#909090"/>
<path d="M603,624.5 Q603,619.5 609.5,619.5 Q616,619.5 616,624.5 L613.5,625 L612.5,623 L606.5,623 L605.5,625 Z" fill="#c82a14" stroke="#801a0a" stroke-width="0.5"/>
<path d="M605,624.5 L614,624.5 L615.5,631 L603.5,631 Z" fill="#d83418" stroke="#801a0a" stroke-width="0.5"/>
<ellipse cx="609.5" cy="627.5" rx="3" ry="1.8" fill="#f4e0d8"/>
<ellipse cx="629.6" cy="625.4" rx="5.8" ry="8.4" transform="rotate(25 629.6 625.4)" fill="#c86010"/>
<path d="M626,631 Q630,625 633,619" stroke="#401800" stroke-width="1" fill="none"/>
<rect x="643" y="618" width="13.7" height="16" rx="1.5" fill="#f8f0d0" stroke="#e0a020" stroke-width="1.2"/>
<rect x="646.5" y="616.5" width="6.5" height="3" fill="#c0c0c0"/>
<text x="646.5" y="631" font-size="10" fill="#888">k</text>
<ellipse cx="669.8" cy="625.4" rx="5.8" ry="7.5" fill="#606060"/>
<path d="M668,620 V631 M668,625.5 L672.5,620.5 M668,625.5 L672.5,630.5" stroke="#d0d0d0" stroke-width="1"/>
<rect x="683" y="617.5" width="13" height="10" fill="#3a6ac0"/>
<rect x="681" y="620" width="12" height="9" fill="#4a8ad8"/>
<circle cx="694" cy="630" r="3.8" fill="#40a840"/>
<path d="M692,630 L693.6,631.8 L696.4,628" stroke="#fff" stroke-width="1" fill="none"/>
<path d="M705.5,625 V621.5 Q709.5,615.5 713.5,621.5 V623" stroke="#5a6aa0" stroke-width="1.6" fill="none"/>
<rect x="703.5" y="624" width="12.5" height="8" rx="1" fill="#3a5aa8"/>
<rect x="705.5" y="630" width="3" height="3" fill="#e0b020"/><rect x="712" y="630" width="3" height="3" fill="#e0b020"/>
<!-- clock -->
<g fill="#0e0e0e">
<path fill-rule="evenodd" d="M741,615.8 H749.4 V633.8 H741 Z M743.4,618.4 V624 H747 V618.4 Z M743.4,626.4 V631.2 H747 V626.4 Z"/>
<rect x="755.3" y="620.8" width="2.3" height="2.4"/><rect x="755.3" y="629" width="2.3" height="2.4"/>
<rect x="761" y="615.8" width="9" height="2.6"/><rect x="761" y="615.8" width="2.6" height="10.6"/><rect x="761" y="623.8" width="9" height="2.6"/><rect x="767.4" y="623.8" width="2.6" height="10"/><rect x="761" y="631.2" width="9" height="2.6"/>
<rect x="771" y="615.8" width="8.2" height="2.6"/><rect x="776.6" y="615.8" width="2.6" height="10.6"/><rect x="771" y="623.8" width="8.2" height="2.6"/><rect x="771" y="623.8" width="2.6" height="10"/><rect x="771" y="631.2" width="8.2" height="2.6"/>
</g>
<!-- lock / power buttons -->
<linearGradient id="gLockBlue" x1="0" y1="0" x2="1" y2="1"><stop offset="0" stop-color="#2e6cc0"/><stop offset="1" stop-color="#8cb8e8"/></linearGradient>
<linearGradient id="gPwrRed" x1="0" y1="0" x2="1" y2="1"><stop offset="0" stop-color="#d01818"/><stop offset="1" stop-color="#f05050"/></linearGradient>
<rect x="793.6" y="614.6" width="20.8" height="21.3" rx="2" fill="url(#gBtnLight)" stroke="#c4ccd6" stroke-width="0.8"/>
<rect x="797.6" y="619.1" width="13.4" height="12.6" fill="url(#gLockBlue)" stroke="#2a5aa0" stroke-width="0.5"/>
<path d="M801.5,624.5 V623 Q804.3,619.8 807.1,623 V624.5" fill="none" stroke="#f0f6ff" stroke-width="1.1"/>
<rect x="801" y="625" width="6.8" height="4.5" fill="none" stroke="#f0f6ff" stroke-width="1"/>
<rect x="817.5" y="614.6" width="20.3" height="21.3" rx="2" fill="url(#gBtnLight)" stroke="#c4ccd6" stroke-width="0.8"/>
<rect x="820.9" y="619.1" width="13" height="12.6" fill="url(#gPwrRed)" stroke="#b01010" stroke-width="0.5"/>
<circle cx="827.4" cy="625.4" r="4.2" fill="none" stroke="#fff" stroke-width="1.2"/>
<rect x="826.8" y="622.6" width="1.2" height="4.6" fill="#fff"/>
<rect x="839" y="614" width="0.8" height="24" fill="#d0d4da"/>
<polygon points="843.1,623 847.7,627 843.1,631" fill="#444"/>
</svg>
</body></html>
